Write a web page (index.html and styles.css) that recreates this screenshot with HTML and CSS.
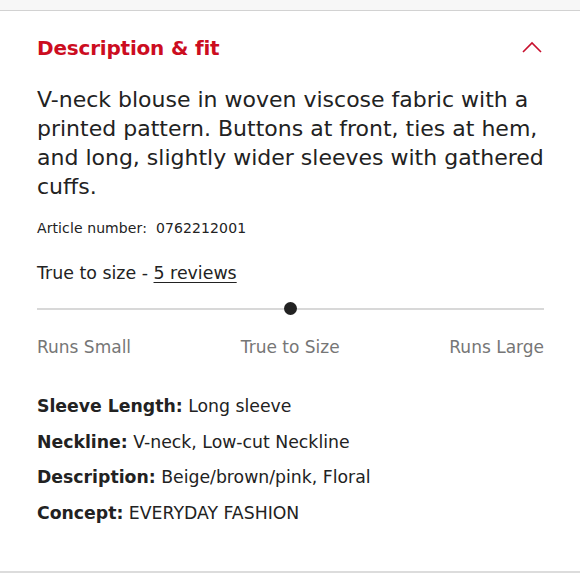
FILE: index.html
```html
<!DOCTYPE html>
<html>
<head>
<meta charset="utf-8">
<link rel="stylesheet" href="styles.css">
</head>
<body>
<div class="topbar"></div>
<section class="panel">
  <header class="head">
    <h2 class="title">Description &amp; fit</h2>
    <svg class="chev" width="20" height="12" viewBox="0 0 20 12"><path d="M1 11 L10 2 L19 11" fill="none" stroke="#c8102e" stroke-width="1.6"/></svg>
  </header>
  <p class="desc">V-neck blouse in woven viscose fabric with a printed pattern. Buttons at front, ties at hem, and long, slightly wider sleeves with gathered cuffs.</p>
  <p class="article">Article number:&nbsp; 0762212001</p>
  <p class="fit">True to size - <a class="rev">5 reviews</a></p>
  <div class="slider"><span class="dot"></span></div>
  <div class="labels"><span>Runs Small</span><span>True to Size</span><span>Runs Large</span></div>
  <ul class="specs">
    <li><b>Sleeve Length:</b> Long sleeve</li>
    <li><b>Neckline:</b> V-neck, Low-cut Neckline</li>
    <li><b>Description:</b> Beige/brown/pink, Floral</li>
    <li><b>Concept:</b> EVERYDAY FASHION</li>
  </ul>
</section>
</body>
</html>
```
FILE: styles.css
```css
html, body { margin: 0; padding: 0; background: #fff; }
body { font-family: "DejaVu Sans", sans-serif; color: #222; width: 580px; height: 580px; overflow: hidden; }
.topbar { height: 10px; background: #f7f7f7; border-bottom: 1px solid #d2d2d2; }
.panel { padding: 0 36px 0 37px; border-bottom: 2px solid #dcdcdc; height: 562px; box-sizing: border-box; }
.head { display: flex; justify-content: space-between; align-items: center; height: 74px; }
.title { margin: 0; font-size: 20px; font-weight: 700; color: #cc0d1f; letter-spacing: -0.2px; }
.chev { margin-top: -3px; margin-right: 2px; }
.desc { margin: 0; font-size: 22px; line-height: 29px; color: #222; }
.article { margin: 19px 0 0; font-size: 14px; letter-spacing: 0.1px; }
.fit { margin: 27px 0 0; font-size: 17.4px; }
.rev { text-decoration: underline; text-underline-offset: 3px; }
.slider { position: relative; height: 2px; background: #d8d8d8; margin-top: 25px; width: 507px; }
.dot { position: absolute; left: 247px; top: -6px; width: 13px; height: 13px; border-radius: 50%; background: #222; }
.labels { display: flex; justify-content: space-between; width: 507px; margin-top: 27px; font-size: 17px; color: #767676; }
.specs { list-style: none; margin: 39px 0 0; padding: 0; font-size: 17.3px; }
.specs li { line-height: 20px; margin-bottom: 15.7px; }
.specs b { font-weight: 700; }
```
